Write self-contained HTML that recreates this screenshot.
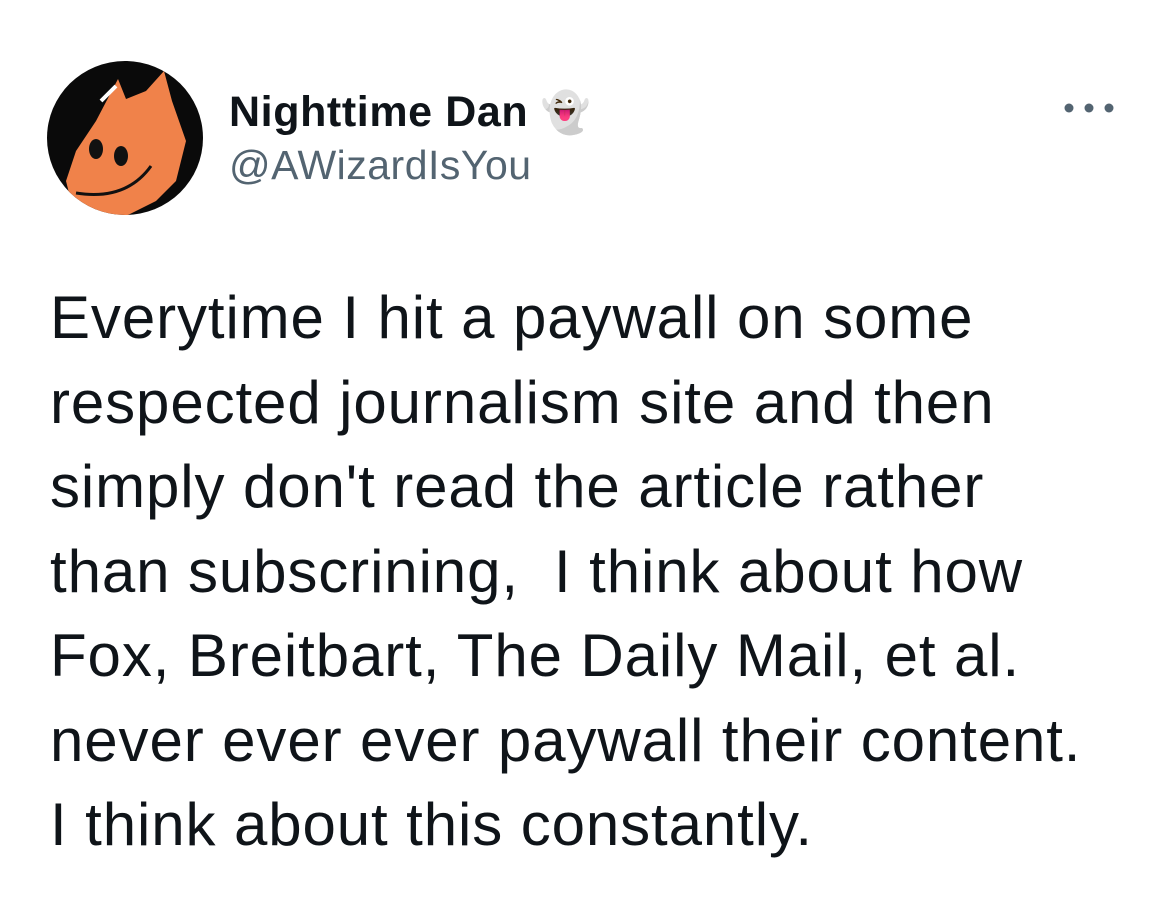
<!DOCTYPE html>
<html><head><meta charset="utf-8"><style>
body{margin:0;width:1170px;height:912px;background:#fff;overflow:hidden;font-family:"Liberation Sans",sans-serif;position:relative}
.name{position:absolute;left:229px;top:86px;font-size:43px;font-weight:bold;color:#0f1419;letter-spacing:0.6px;line-height:52px}
.handle{position:absolute;left:229px;top:140px;font-size:41px;color:#536471;line-height:50px;letter-spacing:0.5px}
.dots{position:absolute;left:1060px;top:98px}
.body{position:absolute;left:50px;top:276px;font-size:60px;line-height:84.5px;color:#0f1419;white-space:pre;letter-spacing:0.9px}
</style></head><body>
<svg style="position:absolute;left:46px;top:61px" width="158" height="155" viewBox="0 0 158 155">
<defs><clipPath id="c"><ellipse cx="79" cy="77" rx="78" ry="77"/></clipPath></defs>
<ellipse cx="79" cy="77" rx="78" ry="77" fill="#0a0a0a"/>
<g clip-path="url(#c)">
<path d="M50 60 L72 18 L80 38 L100 30 L118 10 L126 40 L140 80 L130 120 L110 140 L70 160 L30 160 L20 120 L30 90 Z" fill="#f0824a"/>
<path d="M55 40 L70 25" stroke="#fff" stroke-width="4"/>
<ellipse cx="50" cy="88" rx="7" ry="10" fill="#111"/>
<ellipse cx="75" cy="95" rx="7" ry="10" fill="#111"/>
<path d="M30 132 Q80 140 105 105" stroke="#111" stroke-width="3" fill="none"/>
</g></svg>
<div class="name">Nighttime Dan <span style="font-size:40px;font-weight:normal">👻</span></div>
<div class="handle">@AWizardIsYou</div>
<svg class="dots" width="60" height="20"><circle cx="9" cy="10" r="4.5" fill="#536471"/><circle cx="29" cy="10" r="4.5" fill="#536471"/><circle cx="49" cy="10" r="4.5" fill="#536471"/></svg>
<div class="body">Everytime I hit a paywall on some
respected journalism site and then
simply don't read the article rather
than subscrining,  I think about how
Fox, Breitbart, The Daily Mail, et al.
never ever ever paywall their content.
I think about this constantly.</div>
</body></html>
